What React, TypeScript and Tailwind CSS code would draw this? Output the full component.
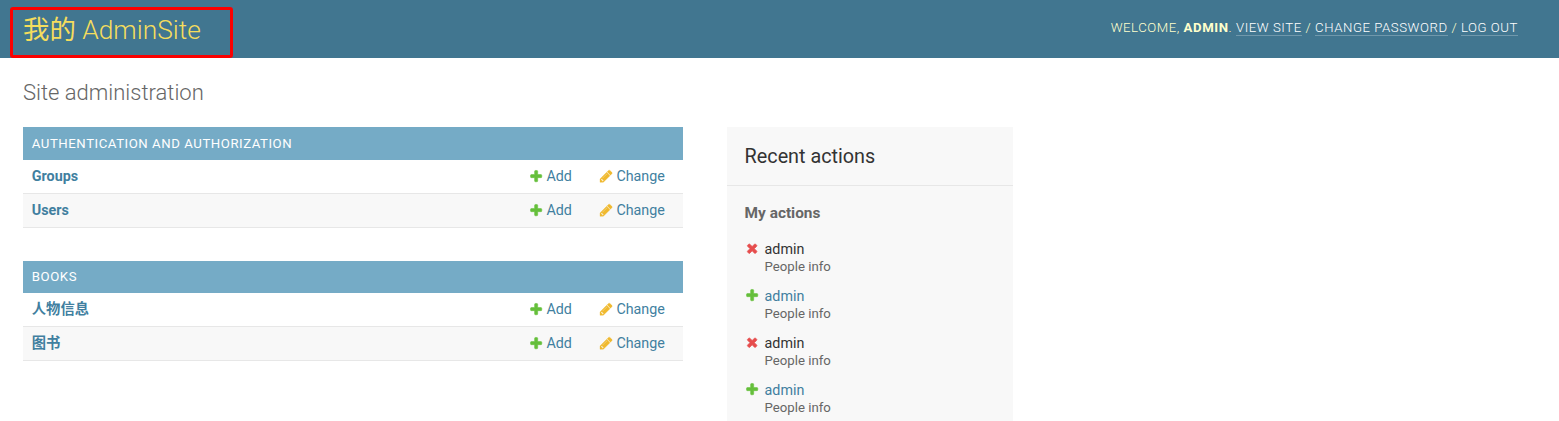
function Plus() {
  return (
    <svg className="block size-[14.3px] shrink-0" viewBox="0 0 1792 1792" fill="#65bf3b" stroke="#65bf3b" strokeWidth="70">
      <path d="M1600 796v192q0 40-28 68t-68 28h-416v416q0 40-28 68t-68 28h-192q-40 0-68-28t-28-68v-416h-416q-40 0-68-28t-28-68v-192q0-40 28-68t68-28h416v-416q0-40 28-68t68-28h192q40 0 68 28t28 68v416h416q40 0 68 28t28 68z" />
    </svg>
  );
}

function Pencil() {
  return (
    <svg className="block size-[14.3px] shrink-0" viewBox="0 0 1792 1792" fill="#f0b92e" stroke="#f0b92e" strokeWidth="40">
      <path d="M491 1536l91-91-235-235-91 91v107h128v128h107zm523-928q0-22-22-22-10 0-17 7l-542 542q-7 7-7 17 0 22 22 22 10 0 17-7l542-542q7-7 7-17zm-54-192l416 416-832 832h-416v-416zm683 96q0 53-37 90l-166 166-416-416 166-165q36-38 90-38 53 0 91 38l235 234q37 39 37 91z" />
    </svg>
  );
}

function Cross() {
  return (
    <svg className="block size-[14.3px] shrink-0" viewBox="0 0 1792 1792" fill="#e64d4d" stroke="#e64d4d" strokeWidth="90">
      <path d="M1490 1322q0 40-28 68l-136 136q-28 28-68 28t-68-28l-294-294-294 294q-28 28-68 28t-68-28l-136-136q-28-28-28-68t28-68l294-294-294-294q-28-28-28-68t28-68l136-136q28-28 68-28t68 28l294 294 294-294q28-28 68-28t68 28l136 136q28 28 28 68t-28 68l-294 294 294 294q28 28 28 68z" />
    </svg>
  );
}

function Module({ title, rows, className }: { title: string; rows: string[]; className: string }) {
  return (
    <section className={className}>
      <h2 className="flex h-full items-center bg-[#75abc6] px-[8.8px] text-[13.2px] font-normal uppercase tracking-[0.55px] text-white">
        {title}
      </h2>
      {rows.map((row, i) => (
        <div
          key={row}
          className={`flex h-full items-center border-b border-[#e7e7e7] pl-[8.8px] text-[14.3px] text-[#417f9f] ${i % 2 ? "bg-[#f8f8f8]" : "bg-white"}`}
        >
          <a className="w-[497px] font-bold">{row}</a>
          <a className="flex w-[70px] items-center gap-[3.3px]">
            <Plus />
            Add
          </a>
          <a className="flex items-center gap-[3.3px]">
            <Pencil />
            Change
          </a>
        </div>
      ))}
    </section>
  );
}

const actions = ["delete", "add", "delete", "add"];

export default function App() {
  return (
    <div className="h-[421px] overflow-hidden bg-white font-['Roboto','Noto_Sans_CJK_SC',sans-serif] text-[#333]">
      <header className="flex h-[58px] items-center justify-between bg-[#417690] pl-[10px] pr-[41px] text-[#ffc]">
        <h1 className="mt-[7px] flex h-[51px] w-[223px] items-center whitespace-pre rounded-[3px] border-[3px] border-[#fa0000] pb-[3px] pl-[10px] text-[26.4px] font-light text-[#f5dd5d]">
          <span className="font-normal">我的</span> AdminSite
        </h1>
        <div className="flex gap-[3.8px] pb-[3px] text-[13.2px] font-light uppercase leading-[15px] tracking-[0.55px]">
          <span>Welcome, <b className="font-bold">admin</b>.</span>
          <a className="border-b border-white/25 text-white">View site</a>/
          <a className="border-b border-white/25 text-white">Change password</a>/
          <a className="border-b border-white/25 text-white">Log out</a>
        </div>
      </header>
      <h1 className="h-[69px] pl-[23px] pt-[20px] text-[22px] font-light leading-[29px] text-[#666]">Site administration</h1>
      <main className="flex gap-[44px] pl-[23px]">
        <div className="w-[660px]">
          <Module className="grid grid-rows-[33px_34px_34px]" title="Authentication and Authorization" rows={["Groups", "Users"]} />
          <Module className="mt-[33px] grid grid-rows-[32px_34px_34px]" title="Books" rows={["人物信息", "图书"]} />
        </div>
        <aside className="h-[294px] w-[286px] bg-[#f8f8f8]">
          <h2 className="h-[59px] border-b border-[#e7e7e7] pl-[17.6px] pt-[18px] text-[19.8px] leading-[24px]">Recent actions</h2>
          <h3 className="pl-[17.6px] pt-[18px] text-[15.4px] font-bold leading-[18px] text-[#666]">My actions</h3>
          <ul className="pl-[18px] pt-[17px]">
            {actions.map((kind, i) => (
              <li key={i} className="flex h-[47px] gap-[5.3px]">
                <div className="pt-[2.4px]">{kind === "add" ? <Plus /> : <Cross />}</div>
                <div>
                  <div className={`text-[14.3px] leading-[20px] ${kind === "add" ? "text-[#417f9f]" : "text-[#333]"}`}>admin</div>
                  <div className="text-[13.2px] leading-[15px] text-[#666]">People info</div>
                </div>
              </li>
            ))}
          </ul>
        </aside>
      </main>
    </div>
  );
}
